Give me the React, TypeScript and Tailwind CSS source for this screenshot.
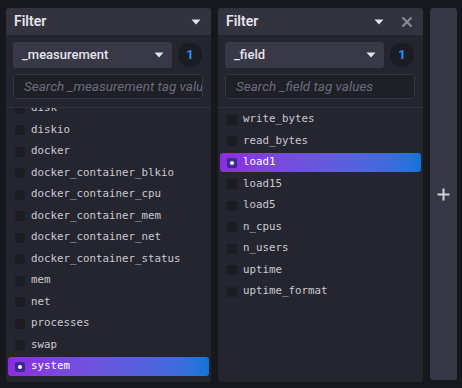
import React from "react"

const mono = { fontFamily: '"DejaVu Sans Mono", monospace' }
const sans = { fontFamily: 'Roboto, "Noto Sans", sans-serif' }

function Caret({ className = "" }: { className?: string }) {
  return (
    <svg width="10" height="6" viewBox="0 0 10 6" className={className}>
      <path d="M0.5 0.5 L9.5 0.5 L5 5.5 Z" fill="currentColor" />
    </svg>
  )
}

function Item({ label, selected }: { label: string; selected?: boolean }) {
  return (
    <div className="h-[21.5px] flex items-center px-[2px]">
      <div
        className={
          "h-[19px] w-full flex items-center rounded-[3px] pl-[7px] " +
          (selected ? "bg-gradient-to-r from-[#8c2be0] to-[#0d74d8] text-white" : "text-[#c9c9d2]")
        }
      >
        <div
          className={
            "w-[10px] h-[10px] rounded-[2px] flex items-center justify-center shrink-0 " +
            (selected ? "bg-[#3b2a92]" : "bg-[#1c1c24]")
          }
        >
          {selected && <div className="w-[4px] h-[4px] rounded-full bg-white" />}
        </div>
        <span className="ml-[6px] text-[10.8px] leading-none whitespace-nowrap" style={mono}>
          {label}
        </span>
      </div>
    </div>
  )
}

function Panel({
  field,
  placeholder,
  items,
  selected,
  offset,
  closable,
}: {
  field: string
  placeholder: string
  items: string[]
  selected: string
  offset: string
  closable?: boolean
}) {
  return (
    <div className="w-[205px] h-[374px] flex flex-col rounded-[3px] overflow-hidden bg-[#25252f]" style={sans}>
      <div className="h-[27px] bg-[#33333f] flex items-center pl-[8px] pr-[10px] shrink-0">
        <span className="text-[14px] font-semibold text-[#e4e4ec]">Filter</span>
        <div className="flex-1" />
        <Caret className="text-[#e4e4ec]" />
        {closable && (
          <svg width="12" height="12" viewBox="0 0 12 12" className="ml-[17px] text-[#8c8c99]">
            <path d="M1.5 1.5 L10.5 10.5 M10.5 1.5 L1.5 10.5" stroke="currentColor" strokeWidth="2" />
          </svg>
        )}
      </div>
      <div className="pl-[7px] pr-[8px] pt-[7px] pb-[8px] border-b border-[#30303b] shrink-0">
        <div className="flex items-center gap-[6px]">
          <div className="w-[159px] h-[26px] rounded-[3px] bg-[#383846] flex items-center pl-[9px] pr-[8px]">
            <span className="text-[13px] font-medium text-[#e4e4ec]">{field}</span>
            <div className="flex-1" />
            <Caret className="text-[#e4e4ec]" />
          </div>
          <div className="w-[24px] h-[24px] rounded-full bg-[#1c1c25] flex items-center justify-center">
            <span className="text-[13px] font-bold text-[#1d9bff]">1</span>
          </div>
        </div>
        <div className="mt-[6px] h-[25px] rounded-[3px] bg-[#1f1f28] border border-[#35353f] flex items-center pl-[10px] overflow-hidden">
          <span className="text-[13.5px] italic text-[#6c6c7a] whitespace-nowrap">{placeholder}</span>
        </div>
      </div>
      <div className="flex-1 overflow-hidden pt-[1px]">
        <div className={offset}>
          {items.map((it) => (
            <Item key={it} label={it} selected={it === selected} />
          ))}
        </div>
      </div>
    </div>
  )
}

export default function App() {
  return (
    <div className="w-[462px] h-[388px] bg-[#17171e] flex gap-[7px] pl-[6px] pt-[8px]">
      <Panel
        field="_measurement"
        placeholder="Search _measurement tag values"
        items={[
          "disk",
          "diskio",
          "docker",
          "docker_container_blkio",
          "docker_container_cpu",
          "docker_container_mem",
          "docker_container_net",
          "docker_container_status",
          "mem",
          "net",
          "processes",
          "swap",
          "system",
        ]}
        selected="system"
        offset="-mt-[11px]"
      />
      <Panel
        field="_field"
        placeholder="Search _field tag values"
        items={["write_bytes", "read_bytes", "load1", "load15", "load5", "n_cpus", "n_users", "uptime", "uptime_format"]}
        selected="load1"
        offset="mt-0"
        closable
      />
      <div className="w-[27px] h-[372px] rounded-[3px] bg-[#373745] flex items-center justify-center">
        <svg width="13" height="13" viewBox="0 0 13 13" className="text-[#d2d2da]">
          <path d="M6.5 0.5 V12.5 M0.5 6.5 H12.5" stroke="currentColor" strokeWidth="2" />
        </svg>
      </div>
    </div>
  )
}
